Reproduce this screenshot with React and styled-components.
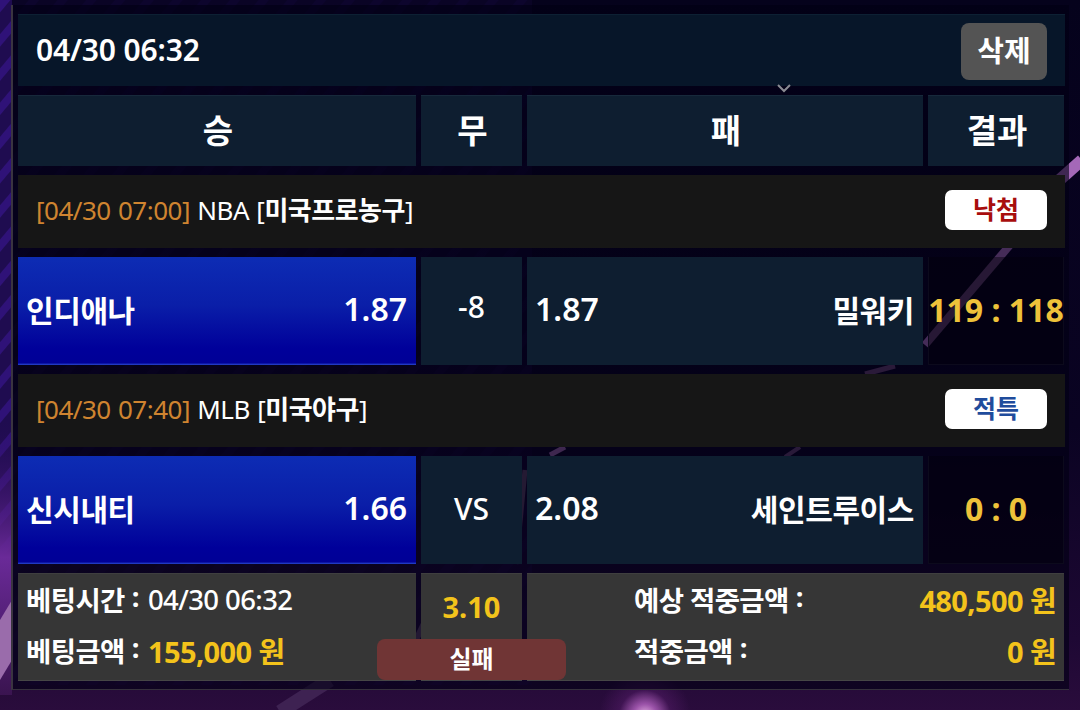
import React from "react";
import styled, { createGlobalStyle } from "styled-components";

const Global = createGlobalStyle`
  html, body { margin: 0; padding: 0; background: #10051f; }
  body { font-family: "Noto Sans", "Noto Sans CJK KR", sans-serif; color: #fff; }
  * { box-sizing: border-box; }
`;

const Page = styled.div`
  position: relative;
  width: 1080px;
  height: 710px;
  overflow: hidden;
  background:
    radial-gradient(circle at 645px 716px, #e9b4e6 0, #9a52a8 12px, rgba(90, 30, 110, 0.45) 26px, transparent 46px),
    linear-gradient(180deg, #05021c 0%, #0a0322 60%, #1e0834 90%, #2a0c3c 100%);
`;

const Backdrop = styled.svg`
  position: absolute;
  inset: 0;
  width: 1080px;
  height: 710px;
`;

const Panel = styled.main`
  position: relative;
  margin: 5px 0 0 11px;
  width: 1058px;
  height: 685px;
  padding: 9px 4px 0 5px;
  border-left: 2px solid #3a3440;
  border-bottom: 1px solid #35303c;
  background: rgba(2, 0, 20, 0.62);
  display: flex;
  flex-direction: column;
`;

const TopBar = styled.header`
  height: 72px;
  padding: 0 18px;
  margin-bottom: 9px;
  display: flex;
  align-items: center;
  justify-content: space-between;
  background: #071629;
  border-top: 1px solid #0d2033;
`;

const Stamp = styled.span`
  font-size: 30px;
  font-weight: 600;
  letter-spacing: -0.15px;
  margin-top: -2px;
`;

const DeleteButton = styled.button`
  width: 86px;
  height: 57px;
  margin: 2px 0 0 0;
  border: 0;
  border-radius: 8px;
  background: #545454;
  color: #fff;
  font: 700 29px "Noto Sans CJK KR", sans-serif;
  padding: 0 0 6px;
`;

const Columns = styled.div`
  display: grid;
  grid-template-columns: 398px 101px 396px 136px;
  column-gap: 5px;
  height: ${(p) => p.$h}px;
  margin-bottom: 9px;
`;

const HeadCell = styled.div`
  display: flex;
  align-items: center;
  justify-content: center;
  padding: 0 0 4px 2px;
  background: #0e1e30;
  border-top: 1px solid #17293b;
  font-family: "Noto Sans CJK KR", sans-serif;
  font-size: 33px;
  font-weight: 700;
`;

const GameBar = styled.div`
  height: 73px;
  margin-bottom: 9px;
  padding: 0 18px;
  display: flex;
  align-items: center;
  justify-content: space-between;
  background: #161616;
`;

const GameInfo = styled.div`
  font-size: 26px;
  letter-spacing: -0.5px;
  word-spacing: 1px;
  font-weight: 400;
  margin-top: -6px;
`;

const GameTime = styled.span`
  color: #cf8430;
`;

const League = styled.b`
  font-weight: 700;
`;

const Badge = styled.div`
  width: 102px;
  height: 40px;
  margin-top: -4px;
  display: flex;
  align-items: center;
  justify-content: center;
  border-radius: 7px;
  background: #fff;
  color: ${(p) => p.$color};
  font-family: "Noto Sans CJK KR", sans-serif;
  font-size: 25px;
  font-weight: 700;
  padding-bottom: 3px;
`;

const TeamCell = styled.div`
  display: flex;
  align-items: flex-start;
  justify-content: space-between;
  padding: 30px 9px 0 8px;
  font-size: 32px;
  font-weight: 600;
  line-height: 44px;
  background: ${(p) =>
    p.$active
      ? "linear-gradient(180deg, #0d2cb4 0%, #0a1ea8 45%, #00009a 85%, #000096 98%, #2a4ad0 100%)"
      : "#0e1e30"};
`;

const TeamName = styled.span`
  margin-top: 2px;
  font-size: 30px;
  font-weight: 700;
  letter-spacing: -0.4px;
`;

const HandicapCell = styled.div`
  display: flex;
  justify-content: center;
  padding-top: ${(p) => p.$top}px;
  background: #0e1e30;
  font-size: 30px;
  line-height: 44px;
  font-weight: 500;
`;

const ScoreCell = styled.div`
  display: flex;
  justify-content: center;
  padding: 31px 0 0;
  background: rgba(2, 0, 12, 0.45);
  border: 1px solid #0c0a1c;
  border-width: 0 1px 1px 1px;
  color: #eec23a;
  font-size: 32px;
  line-height: 44px;
  font-weight: 700;
  white-space: nowrap;
`;

const Summary = styled.div`
  position: relative;
  display: grid;
  grid-template-columns: 398px 101px 537px;
  column-gap: 5px;
  height: 108px;
`;

const SummaryBox = styled.div`
  background: #363636;
  border-top: 1px solid #3f3f3f;
  border-bottom: 1px solid #464646;
`;

const BetInfo = styled(SummaryBox)`
  padding: 3px 0 0 8px;
  display: flex;
  flex-direction: column;
  gap: 7px;
`;

const OddsBox = styled(SummaryBox)`
  display: flex;
  justify-content: center;
  padding-top: 11px;
  color: #f3c31b;
  font-size: 29px;
  line-height: 44px;
  font-weight: 700;
`;

const WinInfo = styled(SummaryBox)`
  padding: 3px 8px 0 107px;
  display: flex;
  flex-direction: column;
  gap: 7px;
`;

const InfoRow = styled.div`
  display: flex;
  align-items: center;
  height: 44px;
  font-size: 27.5px;
  font-weight: 500;
  letter-spacing: -0.6px;
  white-space: nowrap;
`;

const Label = styled.span`
  font-weight: 700;
`;

const Colon = styled.span`
  font-weight: 700;
  margin: 0 9px 0 7px;
  position: relative;
  top: -3px;
`;

const Amount = styled.span`
  margin-left: ${(p) => (p.$right ? "auto" : "0")};
  color: #f3c31b;
  font-size: 29px;
  font-weight: 700;
`;

const FailTag = styled.div`
  position: absolute;
  left: 359px;
  top: 66px;
  width: 189px;
  height: 41px;
  display: flex;
  align-items: center;
  justify-content: center;
  border-radius: 8px;
  background: #703535;
  font-family: "Noto Sans CJK KR", sans-serif;
  font-size: 24px;
  font-weight: 700;
  padding-bottom: 5px;
`;

const Chevron = styled.svg`
  position: absolute;
  left: 764px;
  top: 79px;
  width: 14px;
  height: 9px;
`;

const streaks = [
  [1082, 160, 1020, 215, 12, "#a468b8"],
  [1010, 245, 925, 345, 8, "#b474c8"],
  [895, 366, 865, 374, 5, "#6c4478"],
  [565, 447, 550, 455, 5, "#a068b0"],
  [800, 447, 785, 457, 4, "#6a4478"],
  [525, 470, 516, 564, 5, "#5c4468"],
  [440, 590, 416, 640, 6, "#5b4368"],
  [330, 680, 280, 712, 14, "#3e2252"],
];

function Game({ time, league, name, badge, color, home, homeOdds, mid, midTop, awayOdds, away, score }) {
  return (
    <>
      <GameBar>
        <GameInfo>
          <GameTime>[{time}]</GameTime> {league} [<League>{name}</League>]
        </GameInfo>
        <Badge $color={color}>{badge}</Badge>
      </GameBar>
      <Columns $h={108}>
        <TeamCell $active>
          <TeamName>{home}</TeamName>
          <span>{homeOdds}</span>
        </TeamCell>
        <HandicapCell $top={midTop}>{mid}</HandicapCell>
        <TeamCell>
          <span>{awayOdds}</span>
          <TeamName>{away}</TeamName>
        </TeamCell>
        <ScoreCell>{score}</ScoreCell>
      </Columns>
    </>
  );
}

export default function App() {
  return (
    <Page>
      <Global />
      <Backdrop viewBox="0 0 1080 710" aria-hidden="true">
        <defs>
          <pattern id="weave" width="22" height="22" patternUnits="userSpaceOnUse" patternTransform="rotate(40)">
            <rect width="22" height="22" fill="#1f0c50" />
            <rect width="8" height="22" fill="#2f1278" />
          </pattern>
          <linearGradient id="corner" x1="0" y1="0" x2="0" y2="1">
            <stop offset="0" stopColor="#2a0a58" stopOpacity="0" />
            <stop offset="0.5" stopColor="#6a2a98" />
            <stop offset="1" stopColor="#3a1450" />
          </linearGradient>
        </defs>
        <rect x="0" y="0" width="12" height="600" fill="url(#weave)" />
        <rect x="0" y="420" width="12" height="275" fill="url(#corner)" />
        <polygon points="0,620 12,600 12,660 0,680" fill="#9a6cab" />
        <rect x="12" y="0" width="520" height="685" fill="url(#weave)" opacity="0.18" />
        {streaks.map(([x1, y1, x2, y2, w, c]) => (
          <line key={`${x1}-${y1}`} x1={x1} y1={y1} x2={x2} y2={y2} stroke={c} strokeWidth={w} />
        ))}
      </Backdrop>
      <Panel>
        <TopBar>
          <Stamp>04/30 06:32</Stamp>
          <DeleteButton>삭제</DeleteButton>
        </TopBar>
        <Columns $h={71}>
          <HeadCell>승</HeadCell>
          <HeadCell>무</HeadCell>
          <HeadCell>패</HeadCell>
          <HeadCell>결과</HeadCell>
        </Columns>
        <Game time="04/30 07:00" league="NBA" name="미국프로농구" badge="낙첨" color="#a80d0d"
          home="인디애나" homeOdds="1.87" mid="-8" midTop={28} awayOdds="1.87" away="밀워키" score="119 : 118" />
        <Game time="04/30 07:40" league="MLB" name="미국야구" badge="적특" color="#1f4c9c"
          home="신시내티" homeOdds="1.66" mid="VS" midTop={31} awayOdds="2.08" away="세인트루이스" score="0 : 0" />
        <Summary>
          <BetInfo>
            <InfoRow>
              <Label>베팅시간</Label><Colon>:</Colon>04/30 06:32
            </InfoRow>
            <InfoRow>
              <Label>베팅금액</Label><Colon>:</Colon><Amount>155,000 원</Amount>
            </InfoRow>
          </BetInfo>
          <OddsBox>3.10</OddsBox>
          <WinInfo>
            <InfoRow>
              <Label>예상 적중금액</Label><Colon>:</Colon><Amount $right>480,500 원</Amount>
            </InfoRow>
            <InfoRow>
              <Label>적중금액</Label><Colon>:</Colon><Amount $right>0 원</Amount>
            </InfoRow>
          </WinInfo>
          <FailTag>실패</FailTag>
        </Summary>
        <Chevron viewBox="0 0 14 9" aria-hidden="true">
          <path d="M1 1 L7 7 L13 1" fill="none" stroke="#8b8b93" strokeWidth="2" />
        </Chevron>
      </Panel>
    </Page>
  );
}
